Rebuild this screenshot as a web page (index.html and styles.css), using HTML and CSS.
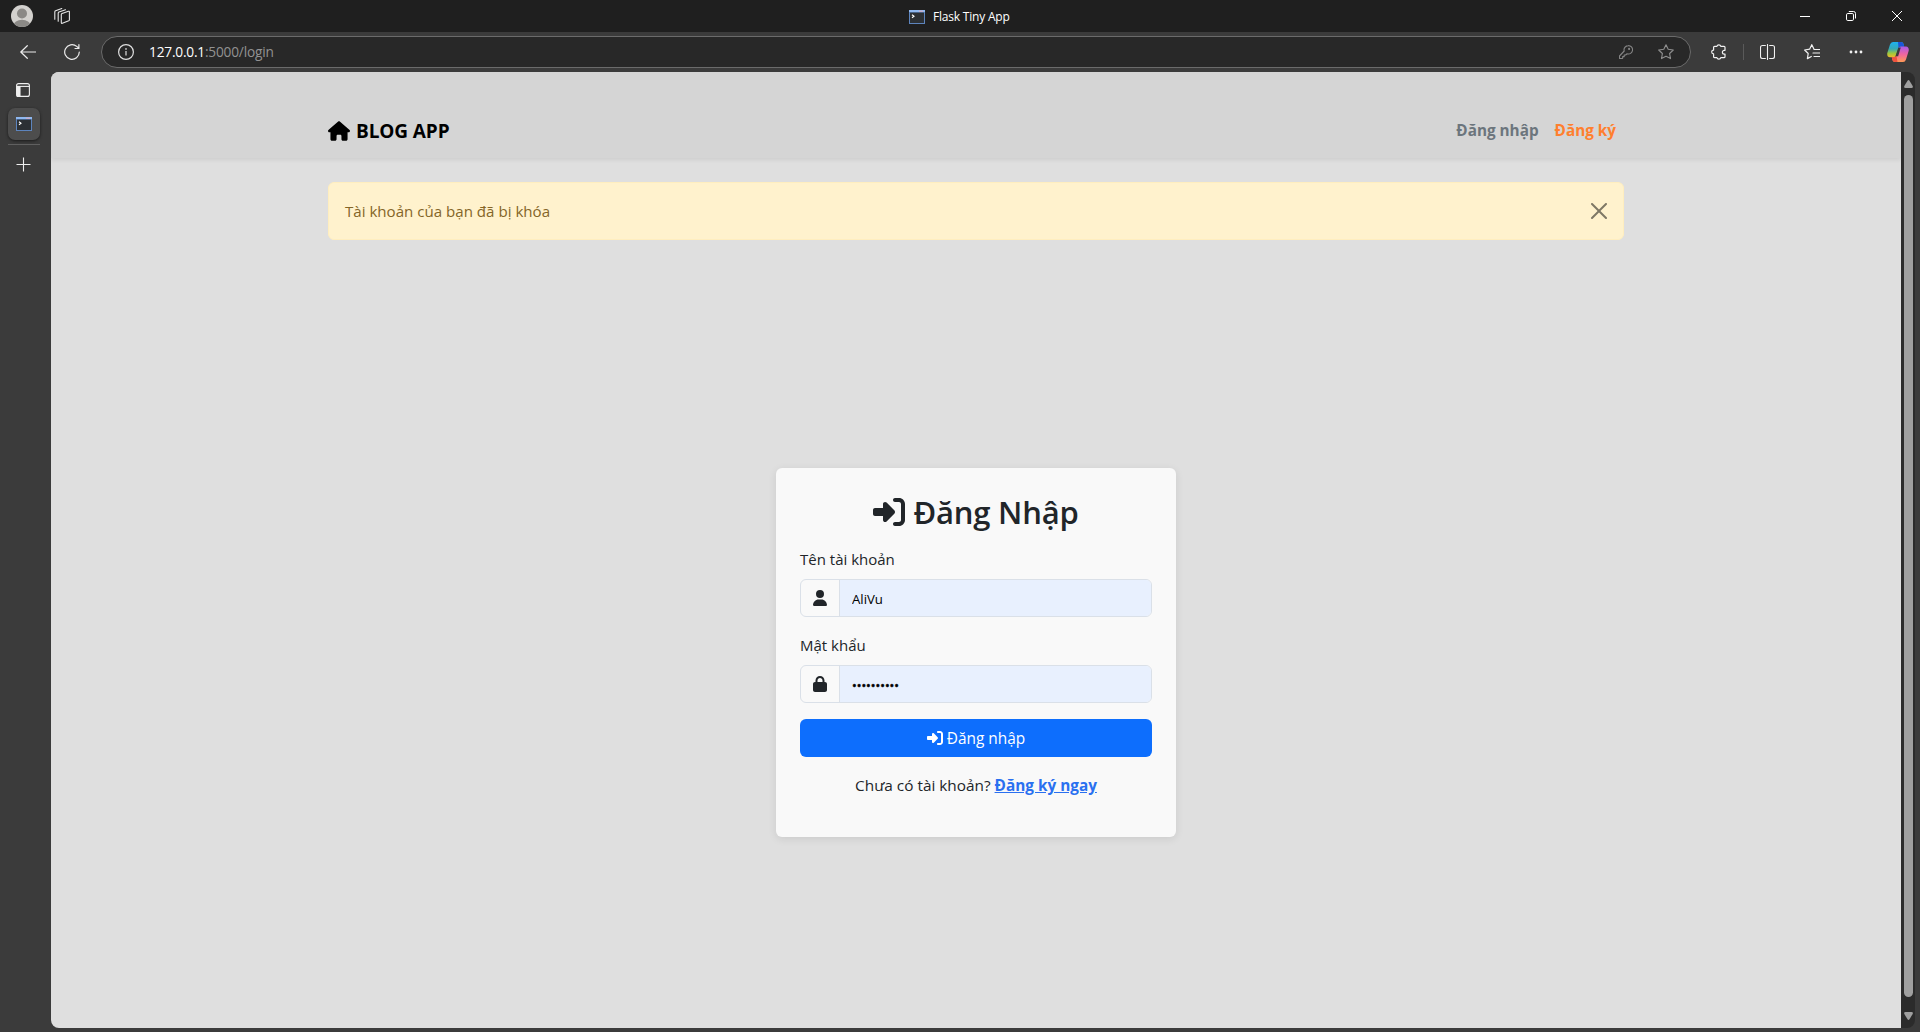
FILE: index.html
```html
<!DOCTYPE html>
<html lang="vi">
<head>
<meta charset="utf-8">
<title>Flask Tiny App</title>
<link rel="stylesheet" href="styles.css">
</head>
<body>
<svg class="defs" width="0" height="0">
  <symbol id="console" viewBox="0 0 16 14">
    <rect width="16" height="14" fill="#5d84bd"/>
    <rect x="0" y="0" width="16" height="2" fill="#8fb8f0"/>
    <rect x="10" y="0.7" width="4" height="1" fill="#e0a9b8"/>
    <rect x="1" y="2.6" width="14" height="10.4" fill="#2c3034"/>
    <path d="M3 4.8l2 1.5-2 1.5" fill="none" stroke="#fff" stroke-width="1.1"/>
  </symbol>
  <symbol id="enter" viewBox="0 0 512 512"><path fill="currentColor" d="M217.9 105.900L340.700 228.700c7.200 7.200 11.300 17.100 11.300 27.300s-4.100 20.100-11.300 27.300L217.900 406.100c-6.400 6.400-15 9.900-24 9.900c-18.700 0-33.900-15.200-33.900-33.900l0-62.100L32 320c-17.700 0-32-14.300-32-32l0-64c0-17.700 14.300-32 32-32l128 0 0-62.100c0-18.700 15.200-33.900 33.900-33.900c9 0 17.600 3.600 24 9.900zM352 416l64 0c17.700 0 32-14.300 32-32l0-256c0-17.700-14.300-32-32-32l-64 0c-17.700 0-32-14.300-32-32s14.300-32 32-32l64 0c53 0 96 43 96 96l0 256c0 53-43 96-96 96l-64 0c-17.700 0-32-14.300-32-32s14.300-32 32-32z"/></symbol>
</svg>
<div class="browser">
  <header class="titlebar">
    <div class="title-left">
      <svg width="22" height="22" viewBox="0 0 22 22"><clipPath id="av"><circle cx="11" cy="11" r="11"/></clipPath><g clip-path="url(#av)"><rect width="22" height="22" fill="#d3d1ce"/><circle cx="11" cy="8.500" r="5" fill="#8b8986"/><ellipse cx="11" cy="20.500" rx="8.500" ry="5.800" fill="#8b8986"/></g></svg>
      <svg width="16" height="16" viewBox="0 0 16 16" fill="none" stroke="#e6e6e6" stroke-width="1.100" stroke-linejoin="round" stroke-linecap="round"><path d="M7.300 6.600q0-.8.8-1.100l6.300-2.200q1-.3 1 .7v7.800q0 .7-.7 1l-6.300 2.500q-1.100.4-1.100-.7zM4.200 13.300V5.200q0-.8.800-1.100l6.500-2.400M.8 11.200V3.900q0-.8.800-1.100L7.800.6"/></svg>
    </div>
    <div class="tab-title"><svg width="16" height="14"><use href="#console"/></svg><span>Flask Tiny App</span></div>
    <div class="window-buttons">
      <svg width="10" height="10" viewBox="0 0 10 10" stroke="#fff" fill="none"><path d="M0 5.500h10"/></svg>
      <svg width="10" height="10" viewBox="0 0 10 10" stroke="#fff" fill="none"><rect x=".5" y="2.500" width="7" height="7" rx="1.300"/><path d="M2.800.5H7.500q2 0 2 2v5"/></svg>
      <svg width="10" height="10" viewBox="0 0 10 10" stroke="#fff" fill="none"><path d="M0 0l10 10M10 0L0 10"/></svg>
    </div>
  </header>

  <div class="toolbar">
    <span class="slot"><svg width="16" height="14" viewBox="0 0 16 14" fill="none" stroke="#ececec" stroke-width="1.200" stroke-linecap="round" stroke-linejoin="round"><path d="M15.500 7H.8M7.300.7L.8 7l6.500 6.300"/></svg></span>
    <span class="slot"><svg width="16" height="16" viewBox="0 0 16 16" fill="none" stroke="#ececec" stroke-width="1.200" stroke-linecap="round"><path d="M15.300 8a7.300 7.300 0 1 1-2.600-5.600L14.600 4M14.900.7V4.500H11"/></svg></span>
    <div class="address">
      <svg width="16" height="16" viewBox="0 0 16 16" fill="none" stroke="#e0e0e0" stroke-width="1.200"><circle cx="8" cy="8" r="7.400"/><path d="M8 7v4.500" /><circle cx="8" cy="4.900" r=".3"/></svg>
      <span class="url"><b>127.0.0.1</b>:5000/login</span>
      <svg class="key" width="14" height="14" viewBox="0 0 14 14" fill="none" stroke="#858585" stroke-width="1.100" stroke-linejoin="round"><path d="M9.200.6a4.200 4.200 0 1 1-1.100 8.200L6.600 10H5.200v1.600H3.700v1.500q0 .4-.5.4H1q-.5 0-.5-.5V11L5.200 6A4.200 4.200 0 0 1 9.200.6z"/><circle cx="10.100" cy="3.900" r=".5" fill="#858585"/></svg>
      <svg width="16" height="16" viewBox="0 0 16 16" fill="none" stroke="#8f8f8f" stroke-width="1.100" stroke-linejoin="round"><path d="M8 .7l2.200 4.600 5.100.7-3.700 3.500.9 5.100L8 12.200l-4.500 2.400.9-5.100L.7 6l5.100-.7z"/></svg>
    </div>
    <span class="slot"><svg width="16" height="16" viewBox="0 0 16 16" fill="none" stroke="#f2f2f2" stroke-width="1.200" stroke-linejoin="round"><path d="M3.600 2.300h2.300a2 1.900 0 0 1 3.900 0h3.200q1 0 1 1v3h-.7a1.900 1.900 0 0 0 0 3.800h.7v2.600q0 1-1 1H9.800a2 1.900 0 0 1-3.900 0H3.600q-1 0-1-1V9.900a1.900 1.900 0 0 1 0-3.800V3.300q0-1 1-1z"/></svg></span>
    <i class="divider"></i>
    <span class="slot"><svg width="15" height="16" viewBox="0 0 15 16" fill="none" stroke="#f2f2f2" stroke-width="1.100" stroke-linecap="round"><path d="M5.400 1.500H2.500q-2 0-2 2v9q0 2 2 2h2.900M9.600 1.500h2.900q2 0 2 2v9q0 2-2 2H9.600M7.500.5v15"/></svg></span>
    <span class="slot"><svg width="16" height="16" viewBox="0 0 16 16" fill="none" stroke="#f2f2f2" stroke-width="1.200" stroke-linejoin="round" stroke-linecap="round"><path d="M7.800.7L5.600 5.200.6 6l3.600 3.500-.8 5.100 3.900-2.100M7.800.7l2.100 4.400M10 5.500h5.500M9 9h6.500M10 12.500h5.500"/></svg></span>
    <span class="slot"><svg width="14" height="4" viewBox="0 0 14 4" fill="#f2f2f2"><circle cx="2" cy="2" r="1.400"/><circle cx="7" cy="2" r="1.400"/><circle cx="12" cy="2" r="1.400"/></svg></span>
    <span class="slot"><svg width="22" height="20" viewBox="0 0 22 20">
      <defs>
        <linearGradient id="ca" x1="0" y1="0" x2="0" y2="1"><stop offset="0" stop-color="#1db1f0"/><stop offset=".45" stop-color="#35a8b5"/><stop offset=".75" stop-color="#9fc83b"/><stop offset="1" stop-color="#f0b82c"/></linearGradient>
        <linearGradient id="cb" x1="0" y1="0" x2="0" y2="1"><stop offset="0" stop-color="#a95bea"/><stop offset=".5" stop-color="#ef65a0"/><stop offset="1" stop-color="#ff9a55"/></linearGradient>
      </defs>
      <path d="M6 0h8q2 0 2.600 2l.6 2.500H14q-1.800 0-2.500 2L9 13.500q-.6 1.700-2.400 1.700H3Q-.3 15.200.3 11L3 2.500Q3.800 0 6 0z" fill="url(#ca)"/>
      <path d="M11 0h3q2 0 2.600 2l.6 2.500H14q-1.800 0-2.500 2z" fill="#1b55d8"/>
      <path d="M16 20H8q-2 0-2.600-2l-.6-2.800h2.400q1.600 0 2.200-1.900l2.200-6.800q.7-2 2.400-2h5q3.200.3 2.700 4.300L19 17.500q-.8 2.500-3 2.500z" fill="url(#cb)"/>
      <path d="M5.400 18l-.6-2.800h2.400q1.600 0 2.200-1.900L10.500 20H8q-2 0-2.600-2z" fill="#f0523f"/>
      <path d="M11.200 5.800l2.600-.2-2.700 8.600-2.600.1z" fill="#3b3b3b"/>
    </svg></span>
  </div>

  <div class="workspace">
    <aside class="tabs">
      <svg width="14" height="14" viewBox="0 0 14 14" fill="none" stroke="#efefef" stroke-width="1.100"><rect x=".6" y=".6" width="12.800" height="12.800" rx="2"/><path d="M1 3.400h12.500"/><path d="M1 3.500h3v10H2q-1 0-1-1z" fill="#efefef"/></svg>
      <div class="tab-active"><svg width="16" height="14"><use href="#console"/></svg></div>
      <i class="tabs-line"></i>
      <svg width="15" height="15" viewBox="0 0 15 15" stroke="#efefef" stroke-width="1.100"><path d="M7.500.5v14M.5 7.500h14"/></svg>
    </aside>

    <main class="page">
      <nav class="navbar">
        <div class="container nav-inner">
          <a class="brand"><svg width="22" height="20" viewBox="0 0 576 512"><path d="M575.800 255.500c0 18-15 32.100-32 32.100h-32l.7 160.200c0 2.700-.2 5.400-.5 8.100V472c0 22.100-17.900 40-40 40H456c-1.100 0-2.200 0-3.300-.1c-1.400 .1-2.800 .1-4.200 .1H416 392c-22.100 0-40-17.900-40-40V448 384c0-17.700-14.300-32-32-32H256c-17.700 0-32 14.300-32 32v64 24c0 22.100-17.900 40-40 40H160 128.100c-1.500 0-3-.1-4.500-.2c-1.200 .1-2.400 .2-3.600 .2H104c-22.100 0-40-17.900-40-40V360c0-.9 0-1.900 .1-2.800V287.600H32c-18 0-32-14-32-32.100c0-9 3-17 10-24L266.400 8c7-7 15-8 22-8s15 2 21 7L564.800 231.500c8 7 12 15 11 24z"/></svg><span>BLOG APP</span></a>
          <div class="nav-links"><a class="nav-link">Đăng nhập</a><a class="nav-link accent">Đăng ký</a></div>
        </div>
      </nav>
      <div class="container alert">
        <span>Tài khoản của bạn đã bị khóa</span>
        <svg class="close" width="16" height="16" viewBox="0 0 16 16"><path d="M.293.293a1 1 0 011.414 0L8 6.586 14.293.293a1 1 0 111.414 1.414L9.414 8l6.293 6.293a1 1 0 01-1.414 1.414L8 9.414l-6.293 6.293a1 1 0 01-1.414-1.414L6.586 8 .293 1.707a1 1 0 010-1.414z"/></svg>
      </div>
      <form class="card">
        <h2 class="card-title"><svg width="32" height="32"><use href="#enter"/></svg><span>Đăng Nhập</span></h2>
        <label class="label" for="user">Tên tài khoản</label>
        <div class="field">
          <span class="field-icon"><svg width="14" height="16" viewBox="0 0 448 512"><path fill="#212529" d="M224 256A128 128 0 1 0 224 0a128 128 0 1 0 0 256zm-45.700 48C79.800 304 0 383.800 0 482.300C0 498.700 13.300 512 29.700 512H418.300c16.400 0 29.700-13.300 29.700-29.700C448 383.800 368.200 304 269.700 304H178.300z"/></svg></span>
          <input class="input" id="user" type="text" value="AliVu">
        </div>
        <label class="label" for="pass">Mật khẩu</label>
        <div class="field">
          <span class="field-icon"><svg width="14" height="16" viewBox="0 0 448 512"><path fill="#212529" d="M144 144v48H304V144c0-44.200-35.800-80-80-80s-80 35.800-80 80zM80 192V144C80 64.500 144.500 0 224 0s144 64.500 144 144v48h16c35.300 0 64 28.700 64 64V448c0 35.300-28.700 64-64 64H64c-35.300 0-64-28.700-64-64V256c0-35.300 28.700-64 64-64H80z"/></svg></span>
          <input class="input dots" id="pass" type="text" value="••••••••••">
        </div>
        <button class="submit" type="button"><svg width="16" height="16"><use href="#enter"/></svg><span>Đăng nhập</span></button>
        <p class="signup"><span>Chưa có tài khoản?</span> <a class="signup-link">Đăng ký ngay</a></p>
      </form>
    </main>

    <div class="scrollbar">
      <svg width="9" height="8" viewBox="0 0 9 8"><path d="M4.500 0Q5 0 5.500.8L8.700 6Q9.400 8 7.500 8h-6Q-.4 8 .3 6L3.500.8Q4 0 4.500 0z" fill="#9f9f9f"/></svg>
      <i class="thumb"></i>
      <svg width="9" height="8" viewBox="0 0 9 8"><path d="M4.500 8Q5 8 5.500 7.200L8.700 2Q9.400 0 7.500 0h-6Q-.4 0 .3 2L3.500 7.200Q4 8 4.500 8z" fill="#9f9f9f"/></svg>
    </div>
  </div>
</div>
</body>
</html>
```
FILE: styles.css
```css
* { box-sizing: border-box; }
body { margin: 0; font-family: "Open Sans", "Noto Sans", sans-serif; font-size: 15px; line-height: 24px; color: #212529; }
svg { display: block; flex: none; }
.defs { position: absolute; }
.browser { height: 1032px; display: grid; grid-template-rows: 32px 40px 1fr; background: #3b3b3b; overflow: hidden; }

.titlebar { display: grid; grid-template-columns: 909px 1fr auto; background: #1f1f1f; }
.title-left { display: flex; align-items: center; gap: 21px; padding-left: 11px; }
.tab-title { display: flex; align-items: center; gap: 8px; padding-top: 1px; color: #fff; font-size: 12px; letter-spacing: -0.200px; white-space: nowrap; }
.window-buttons { display: flex; align-items: center; gap: 36px; padding-right: 18px; }

.toolbar { display: grid; grid-template-columns: 56px 32px 1607px 48px 1px 47px 42px 46px 38px; align-items: center; }
.slot { display: flex; justify-content: center; align-items: center; }
.address { display: flex; align-items: center; height: 32px; margin-left: 13px; padding: 0 16px; width: 1590px; border: 1px solid #6b6b6b; border-radius: 16px; background: #282828; }
.url { flex: 1; margin-left: 15px; font-size: 13.700px; letter-spacing: -0.200px; color: #929292; }
.url b { font-weight: 400; color: #fff; }
.key { margin-right: 25px; }
.divider { width: 1px; height: 16px; background: #5a5a5a; }

.workspace { display: grid; grid-template-columns: 51px 1850px 14px; padding-bottom: 4px; min-height: 0; }
.tabs { display: flex; flex-direction: column; align-items: center; padding: 11px 5px 0 0; }
.tab-active { display: flex; align-items: center; justify-content: center; width: 32px; height: 32px; margin: 11px 0 4px 2px; border-radius: 7px; background: #4d4d4d; box-shadow: 0 1px 3px #1b1b1b; }
.tabs-line { width: 32px; height: 1px; margin: 0 0 12px 2px; background: #606060; }

.page { background: #dfdfdf; border-radius: 8px 0 0 8px; overflow: hidden; }
.container { width: 1296px; margin-left: auto; margin-right: auto; }
.navbar { height: 86px; padding-top: 29px; background: #d5d5d5; box-shadow: 0 2px 4px rgba(0, 0, 0, 0.075); }
.nav-inner { display: flex; justify-content: space-between; align-items: center; height: 58px; padding-right: 8px; }
.brand { display: flex; align-items: center; gap: 6px; padding-top: 1px; color: #000; font-size: 19px; font-weight: 700; letter-spacing: -0.100px; }
.nav-links { display: flex; gap: 16px; }
.nav-link { color: #6c757d; font-weight: 700; font-size: 15.300px; }
.accent { color: #ff7f2e; }
.alert { display: flex; align-items: center; justify-content: space-between; height: 58px; margin-top: 24px; padding: 0 16px; border: 1px solid #ffeebf; border-radius: 6px; background: #fff2cd; color: #846527; font-size: 15.100px; }
.close { opacity: .5; }

.card { width: 400px; height: 369px; margin: 228px auto 0; padding: 24px; border-radius: 6px; background: #f9f9f9; box-shadow: 0 2px 8px rgba(0, 0, 0, 0.090); }
.card-title { display: flex; justify-content: center; align-items: center; gap: 8px; height: 39px; margin: 0 0 16px; font-size: 31px; font-weight: 600; letter-spacing: -0.200px; }
.label { display: block; margin-bottom: 8px; }
.field { display: flex; height: 38px; margin-bottom: 16px; border: 1px solid #dae0e8; border-radius: 6px; overflow: hidden; }
.field-icon { display: flex; align-items: center; justify-content: center; width: 39px; border-right: 1px solid #dae0e8; }
.input { flex: 1; min-width: 0; padding: 2px 12px 0; border: 0; background: #e8f0fe; color: #000; font: 13.200px "Open Sans", sans-serif; }
.dots { font-size: 12.500px; -webkit-text-stroke: 0.5px #000; }
.submit { display: flex; align-items: center; justify-content: center; gap: 4px; width: 100%; height: 38px; padding: 0; border: 0; border-radius: 6px; background: #0d6efd; color: #fff; font: 15.400px "Open Sans", sans-serif; }
.signup { margin: 16px 0; text-align: center; font-size: 15.350px; }
.signup-link { color: #2a70f0; font-weight: 700; text-decoration: underline; }

.scrollbar { display: flex; flex-direction: column; align-items: center; padding: 8px 0; background: #2b2b2b; border-radius: 0 8px 8px 0; }
.thumb { flex: 1; width: 9px; margin: 7px 0 15px; border-radius: 5px; background: #9f9f9f; }
```
